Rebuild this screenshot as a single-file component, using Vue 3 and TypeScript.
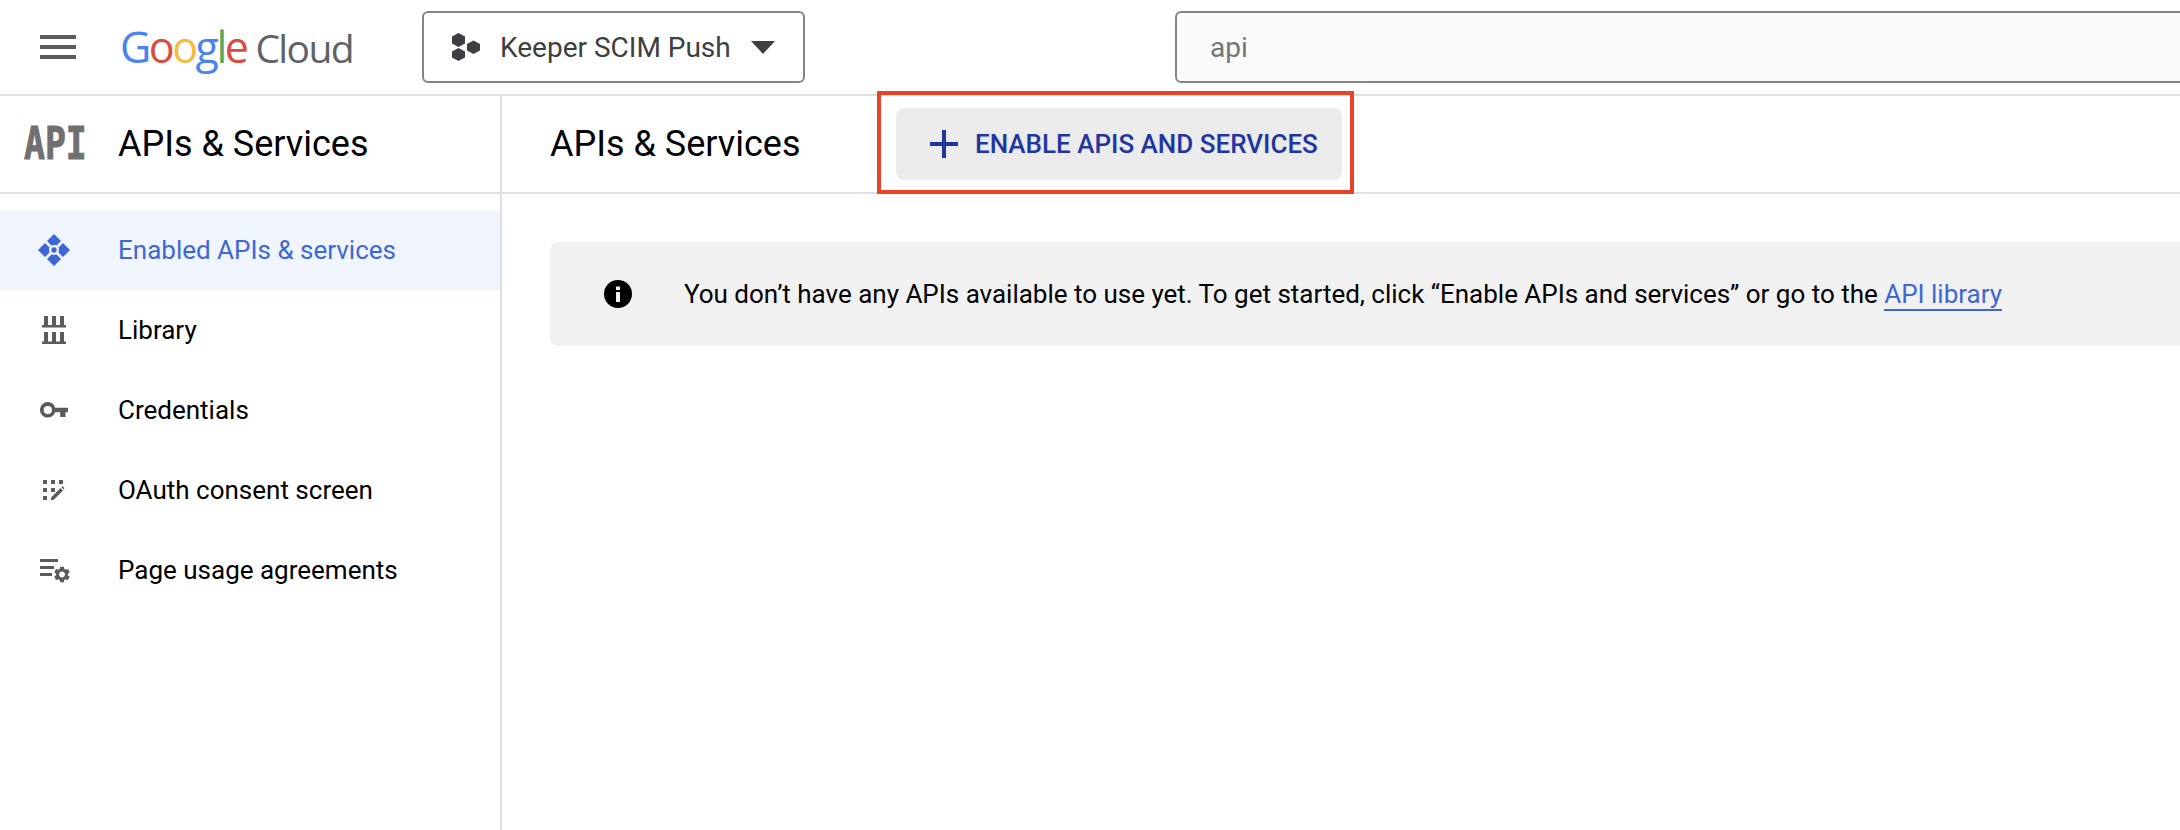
<script setup lang="ts">
interface NavItem { label: string; icon: string; active?: boolean }
const items: NavItem[] = [
  { label: 'Enabled APIs & services', icon: 'enabled', active: true },
  { label: 'Library', icon: 'library' },
  { label: 'Credentials', icon: 'key' },
  { label: 'OAuth consent screen', icon: 'oauth' },
  { label: 'Page usage agreements', icon: 'usage' },
]
const gear = 'M19.14 12.94c.04-.3.06-.61.06-.94 0-.32-.02-.64-.07-.94l2.03-1.58a.49.49 0 0 0 .12-.61l-1.92-3.32a.488.488 0 0 0-.59-.22l-2.39.96c-.5-.38-1.03-.7-1.62-.94l-.36-2.54a.484.484 0 0 0-.48-.41h-3.84c-.24 0-.43.17-.47.41l-.36 2.54c-.59.24-1.13.57-1.62.94l-2.39-.96c-.22-.08-.47 0-.59.22L2.74 8.87c-.12.21-.08.47.12.61l2.03 1.58c-.05.3-.09.63-.09.94s.02.64.07.94l-2.03 1.58a.49.49 0 0 0-.12.61l1.92 3.32c.12.22.37.29.59.22l2.39-.96c.5.38 1.03.7 1.62.94l.36 2.54c.05.24.24.41.48.41h3.84c.24 0 .44-.17.47-.41l.36-2.54c.59-.24 1.13-.56 1.62-.94l2.39.96c.22.08.47 0 .59-.22l1.92-3.32c.12-.22.07-.47-.12-.61l-2.01-1.58zM12 15.6c-1.98 0-3.6-1.62-3.6-3.6s1.62-3.6 3.6-3.6 3.6 1.62 3.6 3.6-1.62 3.6-3.6 3.6z'
</script>

<template>
  <div class="page">
    <header class="topbar">
      <svg class="burger" width="36" height="24" viewBox="0 0 36 24" fill="#5b5b5b">
        <rect width="36" height="4" /><rect y="10" width="36" height="4" /><rect y="20" width="36" height="4" />
      </svg>
      <div class="logo">
        <span class="logo-google"><span class="c-b">G</span><span class="c-r">o</span><span class="c-y">o</span><span class="c-b">g</span><span class="c-g">l</span><span class="c-r">e</span></span>
        <span class="logo-cloud">Cloud</span>
      </div>
      <button class="project">
        <svg width="28" height="28" viewBox="0 0 28 28" fill="#3c4043">
          <path d="M6.500 0 13 3.500v7L6.500 14 0 10.500v-7z" />
          <path d="M6.500 15 13 18.500v6L6.500 28 0 24.500v-6z" />
          <path d="M21.500 7.500 28 11v6.500L21.500 21 15 17.500V11z" />
        </svg>
        <span class="project-name">Keeper SCIM Push</span>
        <svg class="caret" width="24" height="13" viewBox="0 0 24 13" fill="#3c4043"><path d="M0 0h24L12 13z" /></svg>
      </button>
      <div class="search">api</div>
    </header>

    <div class="body">
      <aside class="sidebar">
        <div class="side-head">
          <span class="api-mark">API</span>
          <span class="title">APIs &amp; Services</span>
        </div>
        <nav class="nav">
          <a v-for="item in items" :key="item.label" class="nav-item" :class="{ active: item.active }">
            <span class="nav-icon">
              <svg v-if="item.icon === 'enabled'" width="32" height="32" viewBox="0 0 32 32" fill="#3e67d6">
                <path d="M16 0l7 7-7 7-7-7zM7 9l7 7-7 7-7-7zM25 9l7 7-7 7-7-7zM16 18l7 7-7 7-7-7z" />
                <circle cx="16" cy="16" r="5" fill="#f0f4fd" />
                <circle cx="16" cy="16" r="2.700" />
              </svg>
              <svg v-else-if="item.icon === 'library'" width="24" height="28" viewBox="0 0 24 28" fill="#5b5b5b">
                <path d="M2 0h4v9H2zM10 0h4v9h-4zM18 0h4v9h-4zM0 9h24v2.500H0zM2 16h4v9.500H2zM10 16h4v9.500h-4zM18 16h4v9.500h-4zM0 25.500h24V28H0z" />
              </svg>
              <svg v-else-if="item.icon === 'key'" width="28" height="16" viewBox="0 0 28 16" fill="#5b5b5b">
                <path fill-rule="evenodd" d="M7.800 0a7.800 7.800 0 0 1 7.400 5.800H28v4.400h-2.500V15h-5.300v-4.800h-5A7.800 7.800 0 1 1 7.800 0zm0 3.900a4.100 4.100 0 1 0 0 8.200 4.100 4.100 0 0 0 0-8.200z" />
              </svg>
              <svg v-else-if="item.icon === 'oauth'" width="22" height="20" viewBox="0 0 22 20" fill="#5b5b5b">
                <path d="M0 0h4v4H0zM8 0h4v4H8zM16 0h4v4h-4zM0 8h4v4H0zM8 8h4v4H8zM0 16h4v4H0z" />
                <path d="M8 20v-2.500L17.500 8l2.500 2.500L10.500 20zM18.500 7l1-1 2 2-1 1.500z" />
              </svg>
              <svg v-else-if="item.icon === 'usage'" width="32" height="25" viewBox="0 0 32 25" fill="#5b5b5b">
                <path d="M2 1h18v3H2zM2 8h14v3H2zM2 15h12v3H2z" />
                <path :d="gear" transform="translate(14.160 6.660) scale(0.82)" />
              </svg>
            </span>
            <span>{{ item.label }}</span>
          </a>
        </nav>
      </aside>

      <main class="main">
        <div class="main-head">
          <span class="title">APIs &amp; Services</span>
          <div class="enable-wrap">
            <button class="enable">
              <svg width="28" height="28" viewBox="0 0 28 28" fill="#1f36a0"><path d="M12 0h4v12h12v4H16v12h-4V16H0v-4h12z" /></svg>
              <span>ENABLE APIS AND SERVICES</span>
            </button>
            <span class="callout"></span>
          </div>
        </div>
        <div class="content">
          <div class="notice">
            <svg width="28" height="28" viewBox="0 0 28 28"><circle cx="14" cy="14" r="14" fill="#000" /><rect x="12" y="12" width="4" height="10" fill="#f1f1f1" /><rect x="12" y="6.500" width="4" height="3.500" fill="#f1f1f1" /></svg>
            <p>You don’t have any APIs available to use yet. To get started, click “Enable APIs and services” or go to the <a class="link">API library</a></p>
          </div>
        </div>
      </main>
    </div>
  </div>
</template>

<style>
html, body { margin: 0; overflow: hidden; background: #fff; }
</style>

<style scoped>
.page {
  width: 2180px;
  height: 830px;
  overflow: hidden;
  display: flex;
  flex-direction: column;
  font-family: Roboto, "Liberation Sans", sans-serif;
  color: #000;
}
.topbar {
  height: 94px;
  flex: none;
  display: flex;
  align-items: center;
  border-bottom: 2px solid #e0e0e0;
  padding-left: 40px;
}
.burger { flex: none; margin-right: 44px; }
.logo {
  width: 302px;
  flex: none;
  display: flex;
  gap: 9px;
  align-items: baseline;
  font-family: "Open Sans", Roboto, sans-serif;
  line-height: 48px;
}
.logo-google { font-size: 43px; letter-spacing: -2.5px; font-weight: 500; }
.logo-cloud { font-size: 39px; letter-spacing: -1.6px; color: #5f6368; }
.c-b { color: #4c84ee; }
.c-r { color: #dc4c3e; }
.c-y { color: #f4bd3f; }
.c-g { color: #57a85a; }
.project {
  width: 383px;
  height: 72px;
  flex: none;
  box-sizing: border-box;
  display: flex;
  align-items: center;
  padding: 0 0 0 28px;
  background: #fff;
  border: 2px solid #80868b;
  border-radius: 6px;
  font: inherit;
  font-size: 28px;
  color: #3c4043;
}
.project-name { margin-left: 20px; width: 251px; text-align: left; white-space: nowrap; }
.search {
  flex: 1;
  height: 72px;
  box-sizing: border-box;
  margin-left: 370px;
  margin-right: -20px;
  padding-left: 33px;
  display: flex;
  align-items: center;
  background: #fafafa;
  border: 2px solid #80868b;
  border-radius: 6px;
  font-size: 28px;
  color: #757575;
}
.body { flex: 1; display: flex; min-height: 0; }
.sidebar {
  width: 500px;
  flex: none;
  border-right: 2px solid #e0e0e0;
}
.side-head, .main-head {
  height: 96px;
  border-bottom: 2px solid #e0e0e0;
  display: flex;
  align-items: center;
}
.side-head { padding-left: 24px; }
.api-mark {
  width: 62px;
  margin-right: 32px;
  flex: none;
  font-family: "DejaVu Sans Mono", monospace;
  font-weight: 700;
  font-size: 44px;
  line-height: 44px;
  color: #707070;
  -webkit-text-stroke: 1px #707070;
  transform: scaleX(0.79);
  transform-origin: left center;
  white-space: nowrap;
}
.title { font-size: 36px; white-space: nowrap; }
.nav { padding-top: 16px; }
.nav-item {
  height: 80px;
  display: flex;
  align-items: center;
  font-size: 26px;
  color: #000;
}
.nav-item.active { background: #f0f4fd; color: #3e67d6; }
.nav-icon {
  width: 108px;
  margin-right: 10px;
  display: flex;
  align-items: center;
  justify-content: center;
  flex: none;
  line-height: 0;
}
.main { flex: 1; min-width: 0; }
.main-head { padding-left: 48px; }
.main-head .title { width: 346px; flex: none; }
.enable-wrap { position: relative; display: flex; }
.enable {
  height: 72px;
  width: 446px;
  box-sizing: border-box;
  display: flex;
  align-items: center;
  gap: 17px;
  padding: 0 0 0 34px;
  border: none;
  border-radius: 8px;
  background: #ebebeb;
  color: #1f36a0;
  font: inherit;
  font-size: 26px;
  font-weight: 500;
  white-space: nowrap;
}
.callout {
  position: absolute;
  left: -19px;
  right: -12px;
  top: -17px;
  bottom: -14px;
  border: 4px solid #e8432a;
  pointer-events: none;
}
.content { padding: 48px 0 0 48px; }
.notice {
  height: 104px;
  margin-right: -20px;
  box-sizing: border-box;
  display: flex;
  align-items: center;
  padding-left: 54px;
  background: #f1f1f1;
  border-radius: 8px;
  font-size: 26px;
  letter-spacing: -0.01px;
}
.notice p { margin: 0 0 0 52px; white-space: nowrap; }
.link {
  color: #3e67d6;
  border-bottom: 2px solid #3e67d6;
}
</style>
